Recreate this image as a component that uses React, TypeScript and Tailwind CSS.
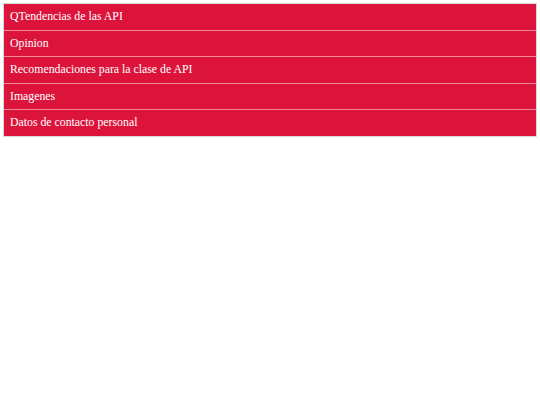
import React from 'react'

const items = [
  'QTendencias de las API',
  'Opinion',
  'Recomendaciones para la clase de API',
  'Imagenes',
  'Datos de contacto personal',
]

export default function App() {
  return (
    <div className="min-h-[405px] bg-white p-[3px]">
      <ul className="border border-[#d8d8d8] bg-[#dc143c]">
        {items.map((item, i) => (
          <li
            key={item}
            className={`box-content flex h-[25.6px] items-center px-[6px] text-[11.8px] text-white [font-family:'Liberation_Serif',serif] ${
              i > 0 ? 'border-t border-[#f2889c]' : ''
            }`}
          >
            {item}
          </li>
        ))}
      </ul>
    </div>
  )
}
